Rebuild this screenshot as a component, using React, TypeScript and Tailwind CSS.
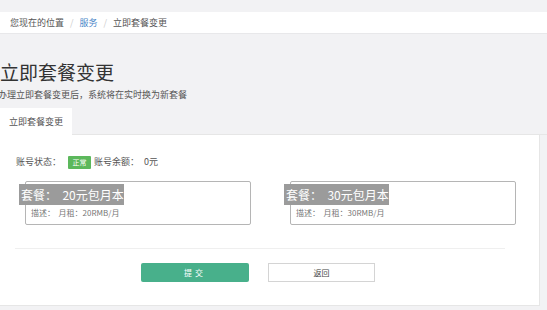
const cjk = { fontFamily: '"Noto Sans CJK SC", "Liberation Sans", sans-serif' };

function PlanCard({ title, desc }: { title: string; desc: string }) {
  return (
    <div className="w-[226px] h-[44px] border border-[#b5b5b5] rounded-[2px] pt-[2px]">
      <div className="-ml-[7px] w-[105px] h-[21px] bg-[#9b9b9b] text-white text-[12px] leading-[21px] pl-[2px] whitespace-pre">
        {title}
      </div>
      <div className="mt-[3px] pl-[5px] text-[8px] leading-[10px] text-[#777] whitespace-pre">{desc}</div>
    </div>
  );
}

export default function App() {
  return (
    <div style={cjk} className="w-[547px] h-[310px] overflow-hidden bg-[#f2f2f4] pt-[12px] text-[#333]">
      {/* breadcrumb */}
      <div className="h-[22px] bg-white flex items-center pl-[10px] text-[9px] text-[#555] border-b border-[#e8e8ea]">
        <span>您现在的位置</span>
        <span className="mx-[6px] text-[#ccc]">/</span>
        <span className="text-[#4a86c8]">服务</span>
        <span className="mx-[6px] text-[#ccc]">/</span>
        <span>立即套餐变更</span>
      </div>

      <h1 className="mt-[28px] text-[19px] leading-[20px] text-[#333]">立即套餐变更</h1>
      <p className="mt-[7px] -ml-[2px] text-[9px] leading-[12px] text-[#555] whitespace-nowrap">
        办理立即套餐变更后，系统将在实时换为新套餐
      </p>

      {/* tab */}
      <div className="mt-[7px] flex">
        <div className="w-[72px] h-[27px] bg-white flex items-center justify-center text-[9px] text-[#555]">
          立即套餐变更
        </div>
        <div className="flex-1 border-b border-[#e6e6e6]" />
      </div>

      {/* panel */}
      <div className="w-[540px] h-[171px] bg-white border-r border-b border-[#e6e6e6] pt-[20px]">
        <div className="flex items-center h-[14px] pl-[16px] text-[9px] text-[#555]">
          <span>账号状态：</span>
          <span className="ml-[7px] w-[23px] h-[13px] bg-[#5cb85c] text-white text-[7px] flex items-center justify-center rounded-[1px]">
            正常
          </span>
          <span className="ml-[3px]">账号余额：</span>
          <span className="ml-[5px]">0元</span>
        </div>

        <div className="mt-[12px] flex pl-[25px] gap-[39px]">
          <PlanCard title="套餐：  20元包月本" desc="描述：  月租：20RMB/月" />
          <PlanCard title="套餐：  30元包月本" desc="描述：  月租：30RMB/月" />
        </div>

        <div className="mt-[23px] ml-[15px] w-[490px] border-t border-[#efefef]" />

        <div className="mt-[14px] flex pl-[141px] gap-[19px]">
          <button className="w-[108px] h-[19px] rounded-[2px] bg-[#48b08b] text-white text-[8px] tracking-[3px]">
            提交
          </button>
          <button className="w-[107px] h-[19px] border border-[#d4d4d4] bg-white text-[#444] text-[8px]">
            返回
          </button>
        </div>
      </div>
    </div>
  );
}
